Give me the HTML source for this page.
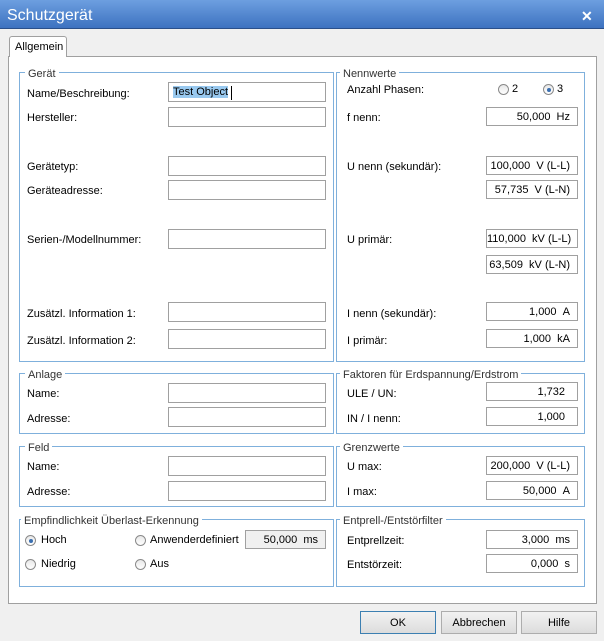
<!DOCTYPE html>
<html><head><meta charset="utf-8"><style>
*{box-sizing:border-box}
body{margin:0;width:604px;height:641px;background:#f0f0f0;font-family:"Liberation Sans",sans-serif;font-size:11px;color:#000;position:relative;overflow:hidden}
.a{position:absolute;white-space:nowrap;padding-top:2px}
.title{left:0;top:0;width:604px;height:29px;background:linear-gradient(#6d9fe0,#3d72c0);border-bottom:1px solid #2a4f8a;padding:0}
.panel{left:8px;top:56px;width:589px;height:548px;background:#fff;border:1px solid #a0a0a0;padding:0}
.tab{left:9px;top:36px;width:58px;height:21px;background:#fff;border:1px solid #a0a0a0;border-bottom:none;border-radius:3px 3px 0 0;padding:4px 0 0 5px}
.g{border:1px solid #7fb0dc;padding:0}
.lg{background:#fff;padding:2px 3px 0;color:#333;line-height:13px}
.in{border:1px solid #a0a0a0;background:#fff;height:20px;padding:0}
.v{border:1px solid #a0a0a0;background:#fff;height:19px;text-align:right;padding:3px 7px 0 0;color:#000}
.r{width:11px;height:11px;border:1px solid #8a8a8a;border-radius:50%;background:linear-gradient(#e8e8e8,#fff);padding:0}
.r.on::after{content:"";position:absolute;left:2.5px;top:2.5px;width:4px;height:4px;border-radius:50%;background:#3a6fb0}
.btn{height:23px;border:1px solid #adadad;background:linear-gradient(#f2f2f2,#dcdcdc);text-align:center;padding-top:5px}
</style></head><body>
<div class="a title"></div>
<div class="a" style="left:7px;top:5px;font-size:16px;color:#fff">Schutzgerät</div>
<div class="a" style="left:581px;top:6px;font-size:14px;color:#fff;font-weight:bold">✕</div>
<div class="a panel"></div>
<div class="a tab">Allgemein</div>

<div class="a g" style="left:19px;top:72px;width:315px;height:290px"></div>
<div class="a lg" style="left:25px;top:66px">Gerät</div>
<div class="a g" style="left:336px;top:72px;width:249px;height:290px"></div>
<div class="a lg" style="left:340px;top:66px">Nennwerte</div>
<div class="a g" style="left:19px;top:373px;width:315px;height:61px"></div>
<div class="a lg" style="left:25px;top:367px">Anlage</div>
<div class="a g" style="left:336px;top:373px;width:249px;height:61px"></div>
<div class="a lg" style="left:340px;top:367px">Faktoren für Erdspannung/Erdstrom</div>
<div class="a g" style="left:19px;top:446px;width:315px;height:61px"></div>
<div class="a lg" style="left:25px;top:440px">Feld</div>
<div class="a g" style="left:336px;top:446px;width:249px;height:61px"></div>
<div class="a lg" style="left:340px;top:440px">Grenzwerte</div>
<div class="a g" style="left:19px;top:519px;width:315px;height:68px"></div>
<div class="a lg" style="left:21px;top:513px">Empfindlichkeit Überlast-Erkennung</div>
<div class="a g" style="left:336px;top:519px;width:249px;height:68px"></div>
<div class="a lg" style="left:340px;top:513px">Entprell-/Entstörfilter</div>

<div class="a" style="left:27px;top:86px">Name/Beschreibung:</div>
<div class="a in" style="left:168px;top:82px;width:158px"><span style="position:absolute;left:4px;top:3px;background:#99c9ef">Test Object</span><span style="position:absolute;left:62px;top:3px;width:1px;height:14px;background:#000"></span></div>
<div class="a" style="left:27px;top:110px">Hersteller:</div>
<div class="a in" style="left:168px;top:107px;width:158px"></div>
<div class="a" style="left:27px;top:159px">Gerätetyp:</div>
<div class="a in" style="left:168px;top:156px;width:158px"></div>
<div class="a" style="left:27px;top:183px">Geräteadresse:</div>
<div class="a in" style="left:168px;top:180px;width:158px"></div>
<div class="a" style="left:27px;top:232px">Serien-/Modellnummer:</div>
<div class="a in" style="left:168px;top:229px;width:158px"></div>
<div class="a" style="left:27px;top:306px">Zusätzl. Information 1:</div>
<div class="a in" style="left:168px;top:302px;width:158px"></div>
<div class="a" style="left:27px;top:333px">Zusätzl. Information 2:</div>
<div class="a in" style="left:168px;top:329px;width:158px"></div>

<div class="a" style="left:27px;top:386px">Name:</div>
<div class="a in" style="left:168px;top:383px;width:158px"></div>
<div class="a" style="left:27px;top:411px">Adresse:</div>
<div class="a in" style="left:168px;top:407px;width:158px"></div>
<div class="a" style="left:27px;top:459px">Name:</div>
<div class="a in" style="left:168px;top:456px;width:158px"></div>
<div class="a" style="left:27px;top:484px">Adresse:</div>
<div class="a in" style="left:168px;top:481px;width:158px"></div>

<div class="a" style="left:347px;top:82px">Anzahl Phasen:</div>
<div class="a r" style="left:498px;top:84px"></div><div class="a" style="left:512px;top:81px">2</div>
<div class="a r on" style="left:543px;top:84px"></div><div class="a" style="left:557px;top:81px">3</div>
<div class="a" style="left:347px;top:110px">f nenn:</div>
<div class="a v" style="left:486px;top:107px;width:92px">50,000 &nbsp;Hz</div>
<div class="a" style="left:347px;top:159px">U nenn (sekundär):</div>
<div class="a v" style="left:486px;top:156px;width:92px">100,000 &nbsp;V (L-L)</div>
<div class="a v" style="left:486px;top:180px;width:92px">57,735 &nbsp;V (L-N)</div>
<div class="a" style="left:347px;top:232px">U primär:</div>
<div class="a v" style="left:486px;top:229px;width:92px">110,000 &nbsp;kV (L-L)</div>
<div class="a v" style="left:486px;top:255px;width:92px">63,509 &nbsp;kV (L-N)</div>
<div class="a" style="left:347px;top:306px">I nenn (sekundär):</div>
<div class="a v" style="left:486px;top:302px;width:92px">1,000 &nbsp;A</div>
<div class="a" style="left:347px;top:333px">I primär:</div>
<div class="a v" style="left:486px;top:329px;width:92px">1,000 &nbsp;kA</div>
<div class="a" style="left:347px;top:386px">ULE / UN:</div>
<div class="a v" style="left:486px;top:382px;width:92px;padding-right:12px">1,732</div>
<div class="a" style="left:347px;top:411px">IN / I nenn:</div>
<div class="a v" style="left:486px;top:407px;width:92px;padding-right:12px">1,000</div>
<div class="a" style="left:347px;top:459px">U max:</div>
<div class="a v" style="left:486px;top:456px;width:92px">200,000 &nbsp;V (L-L)</div>
<div class="a" style="left:347px;top:484px">I max:</div>
<div class="a v" style="left:486px;top:481px;width:92px">50,000 &nbsp;A</div>

<div class="a r on" style="left:25px;top:535px"></div><div class="a" style="left:41px;top:532px">Hoch</div>
<div class="a r" style="left:25px;top:559px"></div><div class="a" style="left:41px;top:556px">Niedrig</div>
<div class="a r" style="left:135px;top:535px"></div><div class="a" style="left:150px;top:532px">Anwenderdefiniert</div>
<div class="a r" style="left:135px;top:559px"></div><div class="a" style="left:150px;top:556px">Aus</div>
<div class="a v" style="left:245px;top:530px;width:81px;background:#f0f0f0">50,000 &nbsp;ms</div>
<div class="a" style="left:347px;top:533px">Entprellzeit:</div>
<div class="a v" style="left:486px;top:530px;width:92px">3,000 &nbsp;ms</div>
<div class="a" style="left:347px;top:557px">Entstörzeit:</div>
<div class="a v" style="left:486px;top:554px;width:92px">0,000 &nbsp;s</div>

<div class="a btn" style="left:360px;top:611px;width:76px;border-color:#3c7fb1">OK</div>
<div class="a btn" style="left:441px;top:611px;width:76px">Abbrechen</div>
<div class="a btn" style="left:521px;top:611px;width:76px">Hilfe</div>
</body></html>
